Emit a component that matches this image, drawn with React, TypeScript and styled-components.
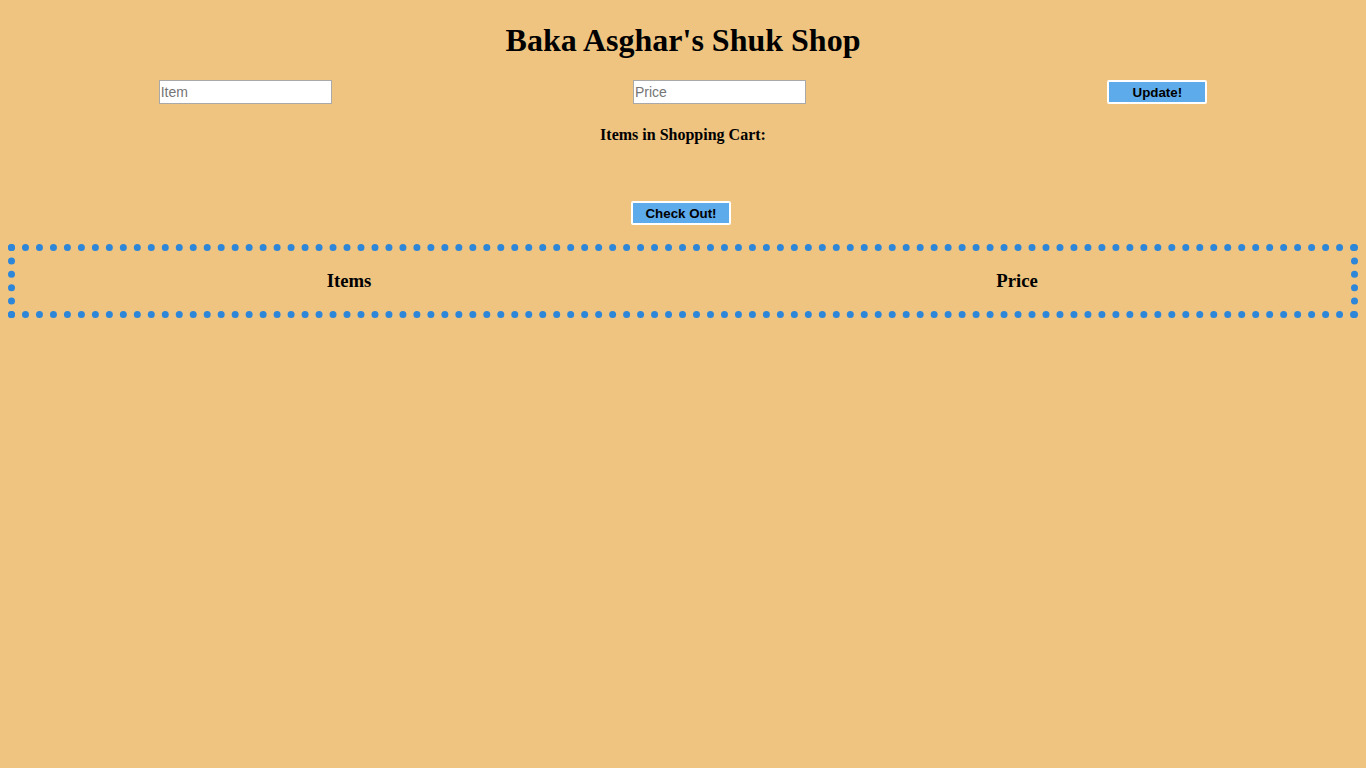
import React from "react";
import styled, { createGlobalStyle } from "styled-components";

const Global = createGlobalStyle`
  html, body { background: #eec480; }
  body { margin: 8px; font-family: "Liberation Serif", "Times New Roman", serif; color: #000; }
`;

const Title = styled.h1`
  font-size: 32px;
  font-weight: bold;
  text-align: center;
  margin: 14px 0 21px;
  line-height: 37px;
`;

const Controls = styled.div`
  display: flex;
  justify-content: space-around;
  align-items: center;
`;

const Input = styled.input`
  box-sizing: border-box;
  width: 173px;
  height: 24px;
  padding: 1px 1px;
  border: 1px solid #a9a9a9;
  font-family: "Liberation Sans", Arial, sans-serif;
  font-size: 14px;
  background: #fff;
  &::placeholder { color: #757575; }
`;

const Button = styled.button`
  box-sizing: border-box;
  width: 100px;
  height: 24px;
  background: #5dabeb;
  border: 2px solid #fff;
  border-radius: 2px;
  font-family: "Liberation Sans", Arial, sans-serif;
  font-weight: bold;
  font-size: 13.33px;
  color: #000;
  padding: 0;
`;

const CartTitle = styled.h4`
  font-size: 16px;
  font-weight: bold;
  text-align: center;
  margin: 21px 0 0;
  line-height: 19px;
`;

const CheckoutRow = styled.div`
  display: flex;
  justify-content: center;
  margin-top: 57px;
  padding-right: 4px;
`;

const Table = styled.table`
  width: 100%;
  margin-top: 19px;
  border: 7px dotted #2e86d8;
  border-spacing: 0;
  table-layout: fixed;
`;

const Th = styled.th`
  width: 50%;
  height: 60px;
  padding: 0;
  font-size: 18.72px;
  font-weight: bold;
  text-align: center;
  vertical-align: middle;
`;

export default function App() {
  return (
    <>
      <Global />
      <Title>Baka Asghar's Shuk Shop</Title>
      <Controls>
        <Input placeholder="Item" />
        <Input placeholder="Price" />
        <Button>Update!</Button>
      </Controls>
      <CartTitle>Items in Shopping Cart:</CartTitle>
      <CheckoutRow>
        <Button>Check Out!</Button>
      </CheckoutRow>
      <Table>
        <thead>
          <tr>
            <Th>Items</Th>
            <Th>Price</Th>
          </tr>
        </thead>
      </Table>
    </>
  );
}
